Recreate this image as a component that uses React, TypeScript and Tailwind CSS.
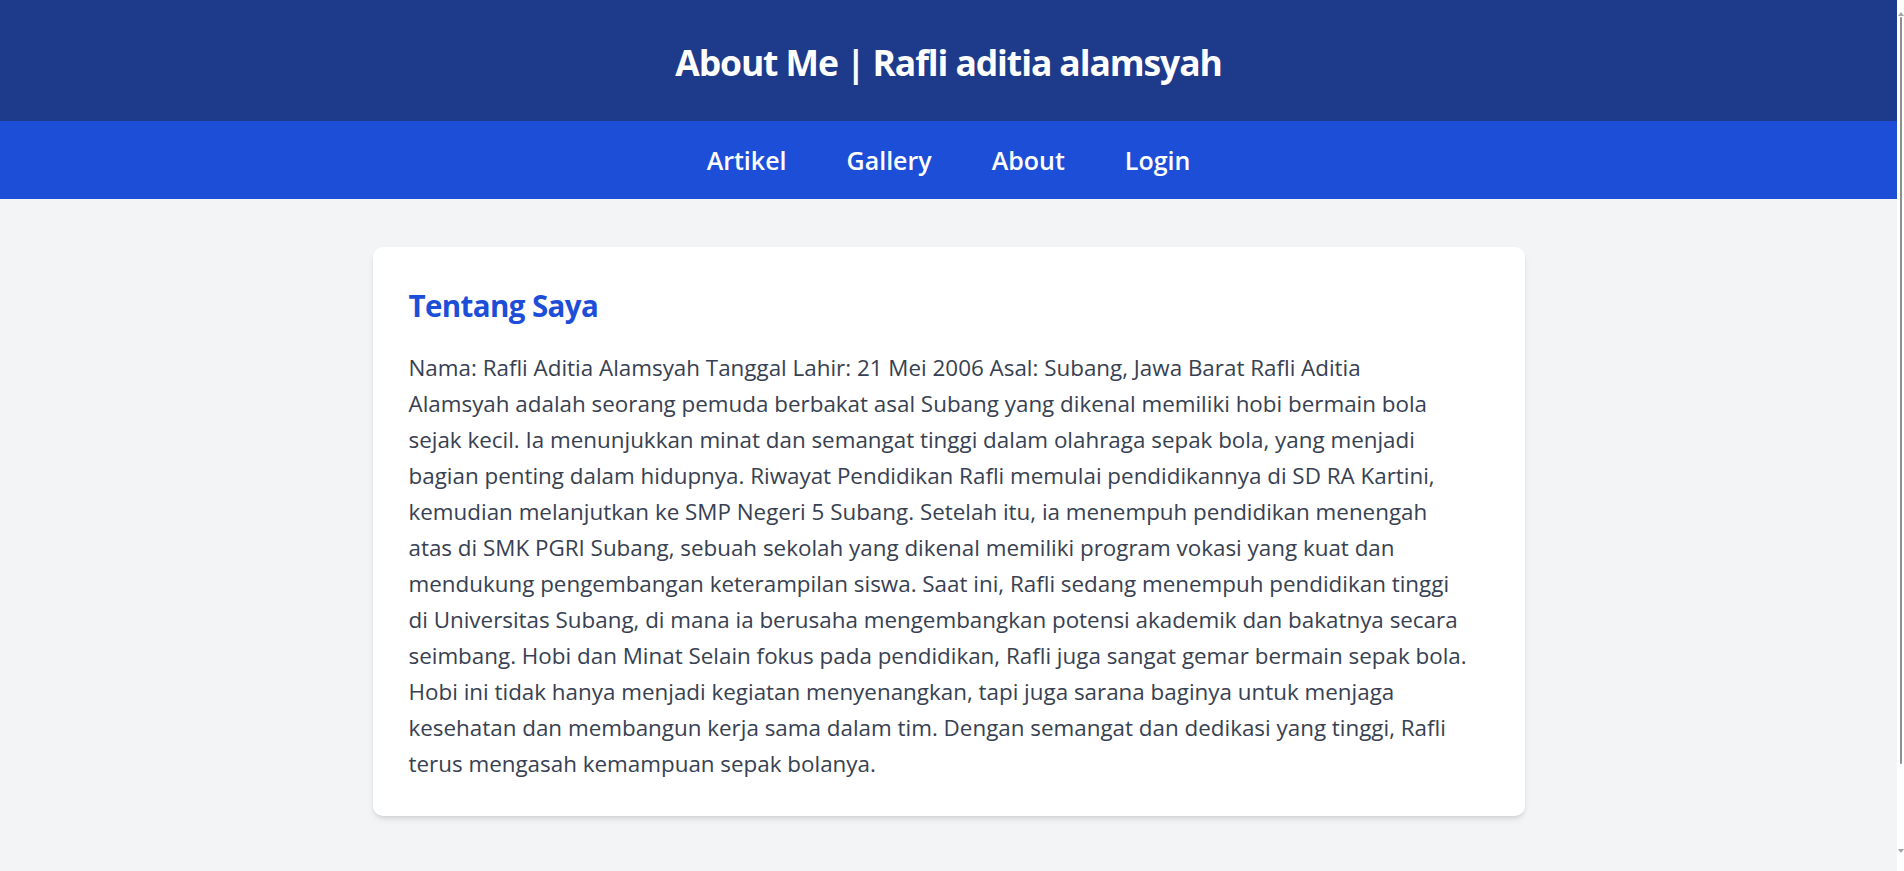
import React from 'react';

const lines = [
  'Nama: Rafli Aditia Alamsyah Tanggal Lahir: 21 Mei 2006 Asal: Subang, Jawa Barat Rafli Aditia',
  'Alamsyah adalah seorang pemuda berbakat asal Subang yang dikenal memiliki hobi bermain bola',
  'sejak kecil. Ia menunjukkan minat dan semangat tinggi dalam olahraga sepak bola, yang menjadi',
  'bagian penting dalam hidupnya. Riwayat Pendidikan Rafli memulai pendidikannya di SD RA Kartini,',
  'kemudian melanjutkan ke SMP Negeri 5 Subang. Setelah itu, ia menempuh pendidikan menengah',
  'atas di SMK PGRI Subang, sebuah sekolah yang dikenal memiliki program vokasi yang kuat dan',
  'mendukung pengembangan keterampilan siswa. Saat ini, Rafli sedang menempuh pendidikan tinggi',
  'di Universitas Subang, di mana ia berusaha mengembangkan potensi akademik dan bakatnya secara',
  'seimbang. Hobi dan Minat Selain fokus pada pendidikan, Rafli juga sangat gemar bermain sepak bola.',
  'Hobi ini tidak hanya menjadi kegiatan menyenangkan, tapi juga sarana baginya untuk menjaga',
  'kesehatan dan membangun kerja sama dalam tim. Dengan semangat dan dedikasi yang tinggi, Rafli',
  'terus mengasah kemampuan sepak bolanya.',
];

const menu = ['Artikel', 'Gallery', 'About', 'Login'];

export default function App() {
  return (
    <div className="flex min-h-[871px] bg-white font-['Open_Sans',sans-serif]">
      <div className="flex-1 bg-[#f3f4f6]">
        <header className="h-[121px] bg-[#1e3a8a] flex items-center justify-center pt-[4px]">
          <h1 className="text-white text-[35.5px] font-bold leading-none tracking-[-1.1px]">
            About Me | Rafli aditia alamsyah
          </h1>
        </header>

        <nav className="h-[78px] bg-[#1d4ed8] flex items-center justify-center gap-[60px]">
          {menu.map((item) => (
            <a key={item} href="#" className="text-white text-[25px] font-semibold leading-none">
              {item}
            </a>
          ))}
        </nav>

        <main className="pt-[48px] pb-[55px]">
          <div className="w-[1152px] mx-auto bg-white rounded-[10px] shadow-md px-[36px] pt-[39px] pb-[34px]">
            <h2 className="text-[#1d4ed8] text-[29.5px] font-bold leading-[40px] mb-[24px] tracking-[-0.6px]">
              Tentang Saya
            </h2>
            <p className="text-[#374151] text-[22.4px] leading-[36px]">
              {lines.map((line) => (
                <span key={line} className="block whitespace-nowrap">
                  {line}
                </span>
              ))}
            </p>
          </div>
        </main>
      </div>

      <div className="w-[7px] bg-white flex flex-col items-center pt-[12px] pb-[18px]">
        <div className="w-0 h-0 border-x-[3px] border-x-transparent border-b-[4px] border-b-[#a3a3a3]" />
        <div className="mt-[1px] w-[2px] h-[747px] rounded-full bg-[#8f8f8f]" />
        <div className="flex-1" />
        <div className="w-0 h-0 border-x-[3px] border-x-transparent border-t-[4px] border-t-[#a3a3a3]" />
      </div>
    </div>
  );
}
